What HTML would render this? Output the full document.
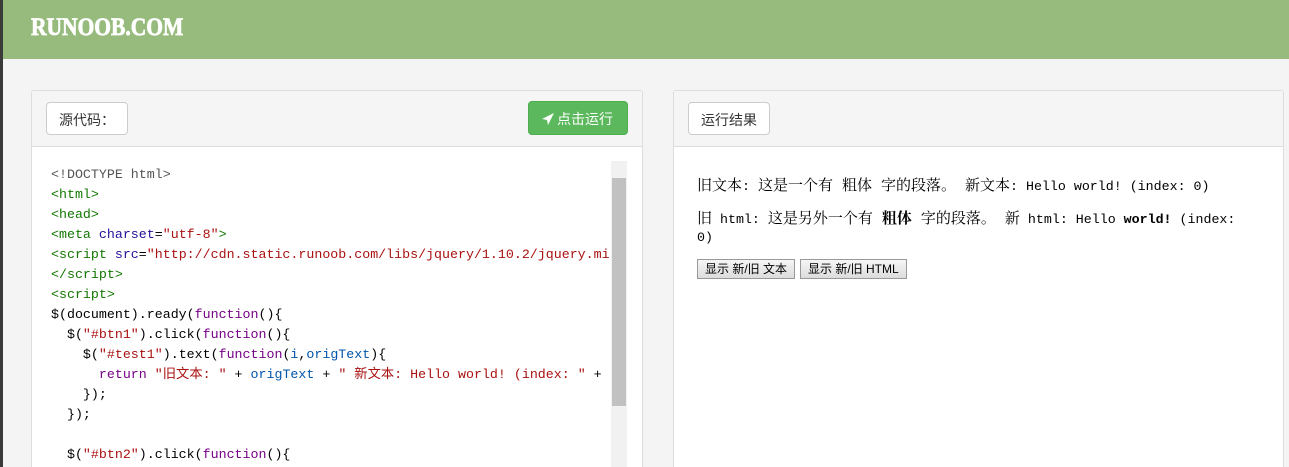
<!DOCTYPE html>
<html style="overflow:hidden"><head><meta charset="utf-8"><style>
*{margin:0;padding:0;box-sizing:border-box}
html,body{width:1289px;height:467px;overflow:hidden}
body{background:#f4f4f4;font-family:"Liberation Sans","Noto Sans CJK SC",sans-serif;position:relative}
.lb{position:absolute;left:0;top:0;width:3px;height:467px;background:#3a3a3a}
.hd{position:absolute;left:3px;top:0;width:1286px;height:59px;background:#96bb7c}
.logo{position:absolute;left:28px;top:14px;color:#fff;font:900 25px "Liberation Serif",serif;transform:scaleX(0.86);transform-origin:left;-webkit-text-stroke:0.8px #fff}
.panel{position:absolute;top:90px;height:377px;background:#fff;border:1px solid #ddd;border-bottom:none;border-radius:3px 3px 0 0;overflow:hidden}
.ph{height:56px;background:#f5f5f5;border-bottom:1px solid #ddd;position:relative}
.tab{position:absolute;left:14px;top:11px;height:33px;background:#fff;border:1px solid #ccc;border-radius:4px;font-size:14px;color:#333;padding:7px 12px}
.run{position:absolute;right:14px;top:10px;width:100px;height:34px;background:#5cb85c;border:1px solid #4cae4c;border-radius:4px;color:#fff;font-size:14px;padding:7px 0 0 28px}
.code{position:absolute;left:19px;top:74px;font:13.3px/20px "Liberation Mono","Noto Sans CJK SC",monospace;color:#000;white-space:pre}
.g{color:#170}.b{color:#219}.s{color:#a11}.p{color:#708}.c{color:#555}.v{color:#05a}
.sb{position:absolute;left:579px;top:70px;width:16px;height:330px;background:#f1f1f1}
.th{position:absolute;left:580px;top:87px;width:14px;height:228px;background:#c1c1c1}
.res{position:absolute;left:23px;top:86px;width:570px;font:13.3px/20px "Liberation Mono","Noto Serif CJK SC",monospace;color:#000}
.cj{font-size:15px}
.btn{display:inline-block;font:12px/16px "Liberation Sans","Noto Sans CJK SC",sans-serif;border:1px solid #999;background:linear-gradient(#f6f6f6,#dcdcdc);padding:1px 7px;height:20px;margin-right:5px}
</style></head><body>
<div class="lb"></div>
<div class="hd"><div class="logo">RUNOOB.COM</div></div>
<div class="panel" style="left:31px;width:612px">
<div class="ph"><div class="tab">源代码：</div><div class="run"><svg style="position:absolute;left:12px;top:10px" width="14" height="14" viewBox="0 0 14 14"><path d="M13 1L1 7l5 1 1 5z" fill="#fff"/></svg>点击运行</div></div>
<div class="code"><span class="c">&lt;!DOCTYPE html&gt;</span>
<span class="g">&lt;html&gt;</span>
<span class="g">&lt;head&gt;</span>
<span class="g">&lt;meta</span> <span class="b">charset</span>=<span class="s">"utf-8"</span><span class="g">&gt;</span>
<span class="g">&lt;script</span> <span class="b">src</span>=<span class="s">"http://cdn.static.runoob.com/libs/jquery/1.10.2/jquery.mi</span>
<span class="g">&lt;/script&gt;</span>
<span class="g">&lt;script&gt;</span>
$(document).ready(<span class="p">function</span>(){
  $(<span class="s">"#btn1"</span>).click(<span class="p">function</span>(){
    $(<span class="s">"#test1"</span>).text(<span class="p">function</span>(<span class="v">i</span>,<span class="v">origText</span>){
      <span class="p">return</span> <span class="s">"旧文本: "</span> + <span class="v">origText</span> + <span class="s">" 新文本: Hello world! (index: "</span> +
    });
  });

  $(<span class="s">"#btn2"</span>).click(<span class="p">function</span>(){</div>
<div class="sb"></div><div class="th"></div>
</div>
<div class="panel" style="left:673px;width:611px">
<div class="ph"><div class="tab">运行结果</div></div>
<div class="res">
<p style="margin-bottom:14px"><span class="cj">旧文本</span>: <span class="cj">这是一个有 粗体 字的段落。 新文本</span>: Hello world! (index: 0)</p>
<p style="line-height:18px;margin-bottom:12px"><span class="cj">旧</span> html: <span class="cj">这是另外一个有 <b>粗体</b> 字的段落。 新</span> html: Hello <b>world!</b> (index:<br>0)</p>
<span class="btn">显示 新/旧 文本</span><span class="btn">显示 新/旧 HTML</span>
</div>
</div>
</body></html>
